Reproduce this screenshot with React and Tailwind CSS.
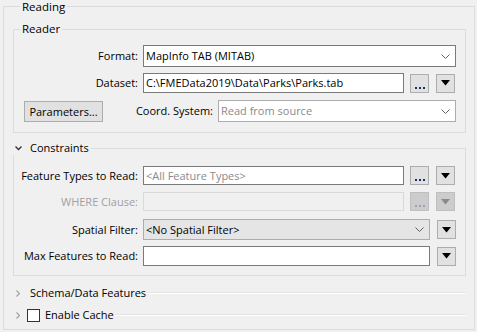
import React from 'react';

const font = { fontFamily: '"Segoe UI", "Open Sans", "Noto Sans", sans-serif' };

const Chevron = ({ className = '' }) => (
    <svg width="9" height="5" viewBox="0 0 9 5" className={className}>
        <path d="M0.5 0.5 L4.5 4.5 L8.5 0.5" fill="none" stroke="#606060" strokeWidth="1" />
    </svg>
);

const ArrowButton = ({ disabled }) => (
    <div className={`ml-[7px] w-[19px] h-[19px] flex items-center justify-center border ${disabled ? 'bg-[#cccccc] border-[#bfbfbf]' : 'bg-[#e1e1e1] border-[#adadad]'}`}>
        <svg width="9" height="6" viewBox="0 0 9 6">
            <path d="M0 0 H9 L4.5 5.5 Z" fill={disabled ? '#8a8a8a' : '#000'} />
        </svg>
    </div>
);

const DotsButton = ({ disabled }) => (
    <div className={`ml-[6px] w-[19px] h-[19px] flex items-end justify-center pb-[3px] border ${disabled ? 'bg-[#cccccc] border-[#bfbfbf]' : 'bg-[#e1e1e1] border-[#adadad]'}`}>
        <div className="flex gap-[2px]">
            <span className={`w-[2px] h-[2px] ${disabled ? 'bg-[#9aa3b5]' : 'bg-[#1c2f6b]'}`}></span>
            <span className={`w-[2px] h-[2px] ${disabled ? 'bg-[#9aa3b5]' : 'bg-[#1c2f6b]'}`}></span>
            <span className={`w-[2px] h-[2px] ${disabled ? 'bg-[#9aa3b5]' : 'bg-[#1c2f6b]'}`}></span>
        </div>
    </div>
);

const Label = ({ children, muted }) => (
    <div className={`w-[129px] shrink-0 pr-[5px] text-right ${muted ? 'text-[#a0a0a0]' : 'text-black'}`}>
        {children}
    </div>
);

const RightChevron = () => (
    <svg width="4" height="7" viewBox="0 0 4 7">
        <path d="M0.5 0.5 L3.5 3.5 L0.5 6.5" fill="none" stroke="#a0a0a0" strokeWidth="1.2" />
    </svg>
);

export default function App() {
    return (
        <div className="w-[477px] h-[332px] bg-[#f0f0f0] overflow-hidden pl-[3px] text-[11px] leading-[14px] text-black" style={font}>
            <fieldset className="w-[472px] h-[330px] border border-[#dcdcdc] pl-[9px] pr-[8px]">
                <legend className="ml-[7px] px-[2px] pt-[1px] leading-[12px] text-[11.5px]">Reading</legend>

                {/* Reader group */}
                <fieldset className="mt-[9px] h-[111px] border border-[#dcdcdc] pr-[9px] pt-[9px]">
                    <legend className="ml-[6px] px-[2px] leading-[14px] text-[11.5px]">Reader</legend>

                    <div className="flex items-center h-[22px]">
                        <Label>Format:</Label>
                        <div className="w-[313px] h-[22px] flex items-center justify-between bg-white border border-[#7a7a7a] pl-[2px] pr-[5px]">
                            <span>MapInfo TAB (MITAB)</span>
                            <Chevron />
                        </div>
                    </div>

                    <div className="flex items-center h-[20px] mt-[6px]">
                        <Label>Dataset:</Label>
                        <div className="w-[261px] h-[20px] flex items-center bg-white border border-[#7a7a7a] pl-[2px]">
                            C:\FMEData2019\Data\Parks\Parks.tab
                        </div>
                        <DotsButton />
                        <ArrowButton />
                    </div>

                    <div className="flex items-center h-[22px] mt-[7px]">
                        <div className="ml-[10px] w-[79px] h-[21px] mt-[1px] flex items-center justify-center bg-[#e1e1e1] border border-[#adadad]">
                            Parameters...
                        </div>
                        <div className="flex-1 text-right pr-[5px]">Coord. System:</div>
                        <div className="w-[238px] h-[22px] flex items-center justify-between bg-white border border-[#adadad] pl-[2px] pr-[5px] text-[#8a8a8a]">
                            <span>Read from source</span>
                            <Chevron />
                        </div>
                    </div>
                </fieldset>

                {/* Constraints header */}
                <div className="mt-[8px] flex items-center h-[14px]">
                    <div className="w-[17px] flex justify-start pl-[2px] pt-[1px]">
                        <svg width="7" height="5" viewBox="0 0 7 5">
                            <path d="M0.5 0.5 L3.5 3.5 L6.5 0.5" fill="none" stroke="#303030" strokeWidth="1.3" />
                        </svg>
                    </div>
                    <span className="pr-[2px]">Constraints</span>
                    <div className="flex-1 h-[7px] self-end border-t border-r border-[#dcdcdc]"></div>
                </div>

                {/* Constraints group */}
                <div className="h-[121px] border-l border-r border-b border-[#dcdcdc] pt-[11px]">
                    <div className="flex items-center h-[19px]">
                        <Label>Feature Types to Read:</Label>
                        <div className="w-[261px] h-[19px] flex items-center bg-white border border-[#7a7a7a] pl-[2px] text-[#8a8a8a]">
                            &lt;All Feature Types&gt;
                        </div>
                        <DotsButton />
                        <ArrowButton />
                    </div>

                    <div className="flex items-center h-[19px] mt-[7px]">
                        <Label muted>WHERE Clause:</Label>
                        <div className="w-[261px] h-[19px] bg-[#f0f0f0] border border-[#d9d9d9]"></div>
                        <DotsButton disabled />
                        <ArrowButton disabled />
                    </div>

                    <div className="flex items-center h-[21px] mt-[8px]">
                        <Label>Spatial Filter:</Label>
                        <div className="w-[287px] h-[21px] flex items-center justify-between bg-[#e5e5e5] border border-[#adadad] pl-[2px] pr-[5px]">
                            <span>&lt;No Spatial Filter&gt;</span>
                            <Chevron />
                        </div>
                        <ArrowButton />
                    </div>

                    <div className="flex items-center h-[20px] mt-[6px]">
                        <Label>Max Features to Read:</Label>
                        <div className="w-[287px] h-[20px] bg-white border border-[#7a7a7a]"></div>
                        <ArrowButton />
                    </div>
                </div>

                {/* Collapsed sections */}
                <div className="mt-[9px] flex items-center h-[16px]">
                    <div className="w-[17px] flex justify-start pl-[3px]">
                        <RightChevron />
                    </div>
                    <span className="pr-[1px]">Schema/Data Features</span>
                    <div className="flex-1 h-[2px] border-t border-[#e3e3e3] bg-white"></div>
                </div>

                <div className="mt-[6px] flex items-center h-[16px]">
                    <div className="w-[14px] flex justify-start pl-[3px]">
                        <RightChevron />
                    </div>
                    <div className="w-[13px] h-[13px] bg-white border border-[#333333]"></div>
                    <span className="pl-[5px] pr-[1px]">Enable Cache</span>
                    <div className="flex-1 h-[2px] border-t border-[#e3e3e3] bg-white"></div>
                </div>
            </fieldset>
        </div>
    );
}
